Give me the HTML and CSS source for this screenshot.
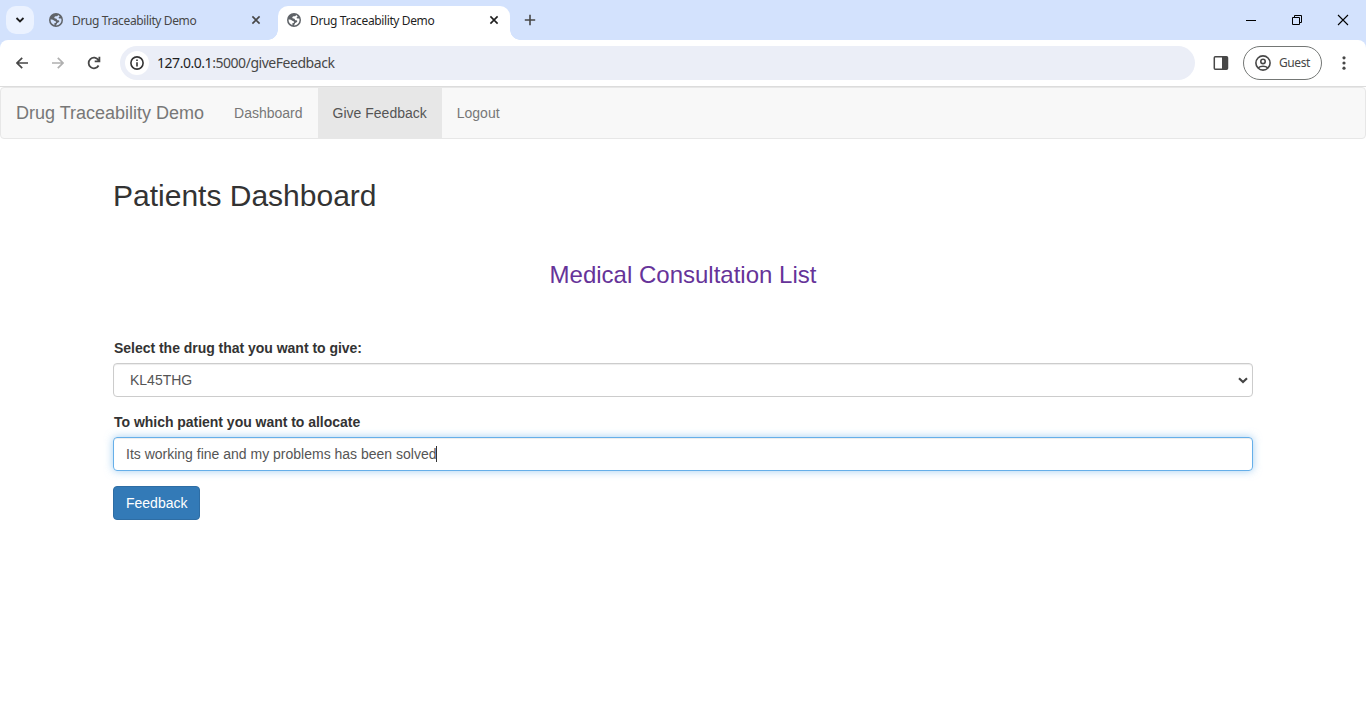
FILE: index.html
```html
<!DOCTYPE html>
<html lang="en">
<head>
<meta charset="utf-8">
<title>Drug Traceability Demo</title>
<link rel="stylesheet" href="styles.css">
</head>
<body>
<svg class="defs" width="0" height="0">
  <symbol id="globe" viewBox="0 0 14 14">
    <circle cx="7" cy="7" r="7" fill="#5f6368"/>
    <path fill="currentColor" d="M9.2 1.9C8.6 3.2 7.6 3.2 6.5 3.3C5.2 3.7 4.8 5.1 6 5.6C7.3 5.6 7.9 6 8 7.1C8.8 7.6 9.9 7.2 10.3 8.1C10.3 9.2 9.2 9.9 8.1 10.1C7.9 11.2 7.2 11.8 7 12.5C10.2 12.4 12.5 10 12.5 7C12.5 6.4 12.4 5.9 12.2 5.4C11.4 5.8 10.6 5.6 9.8 5.3C9.2 4.8 9.9 4.3 10.7 3.6C10.5 2.9 9.9 2.3 9.2 1.9ZM1.5 6.6C1.4 9.4 3.3 11.6 5.5 12.2L5.2 10.5C5.7 9.9 6.9 10.1 7.1 9.2C7.1 8.3 5.9 8.3 5.3 7.8C4.6 7 3.3 6.6 1.5 6.6Z"/>
  </symbol>
  <symbol id="close" viewBox="0 0 10 10"><path d="M1.4 1.4 8.6 8.6M8.6 1.4 1.4 8.6" fill="none" stroke="currentColor" stroke-width="1.6"/></symbol>
</svg>

<header class="browser">
  <div class="tabstrip">
    <div class="tab-search"><svg width="10" height="6" viewBox="0 0 10 6"><path d="M1.5 1 5 4.5 8.5 1" fill="none" stroke="#1f1f1f" stroke-width="1.8"/></svg></div>
    <div class="tab">
      <svg class="favicon"><use href="#globe"/></svg><span class="tab-title">Drug Traceability Demo</span><svg class="tab-close"><use href="#close"/></svg>
    </div>
    <div class="tab active">
      <svg class="favicon"><use href="#globe"/></svg><span class="tab-title">Drug Traceability Demo</span><svg class="tab-close"><use href="#close"/></svg>
    </div>
    <svg class="new-tab" width="12" height="12" viewBox="0 0 12 12"><path d="M6 .8V11.2M.8 6H11.2" stroke="#474747" stroke-width="1.6"/></svg>
    <div class="window-buttons">
      <svg width="12" height="12" viewBox="0 0 12 12"><path d="M1 6.5H11" stroke="#000"/></svg>
      <svg width="12" height="12" viewBox="0 0 12 12"><path d="M1.5 3.5H8.5V10.5H1.5ZM3.5 3.5V1.5H10.5V8.5H8.5" fill="none" stroke="#000"/></svg>
      <svg width="12" height="12" viewBox="0 0 12 12"><path d="M1 1 11 11M11 1 1 11" stroke="#000" stroke-width="1.1"/></svg>
    </div>
  </div>
  <div class="toolbar">
    <div class="nav-buttons">
      <svg width="12" height="12" viewBox="0 0 12 12"><path d="M12 6H1.3M6.2 .8 1 6l5.2 5.2" fill="none" stroke="#474747" stroke-width="1.7"/></svg>
      <svg width="12" height="12" viewBox="0 0 12 12"><path d="M0 6H10.7M5.8 .8 11 6l-5.2 5.2" fill="none" stroke="#b0b0b0" stroke-width="1.7"/></svg>
      <svg width="14" height="14" viewBox="0 0 14 14"><path d="M11.6 9.5A5.3 5.3 0 1 1 11.4 4.1L12.3 5.2M12.4 .8V5.4H7.7" fill="none" stroke="#474747" stroke-width="1.8"/></svg>
    </div>
    <div class="omnibox">
      <span class="site-info"><svg width="14" height="14" viewBox="0 0 14 14"><circle cx="7" cy="7" r="6.1" fill="none" stroke="#333" stroke-width="1.6"/><path d="M7 6.2V10.4M7 3.5V5" stroke="#333" stroke-width="1.6"/></svg></span>
      <span class="url"><span class="host">127.0.0.1</span>:5000/giveFeedback</span>
    </div>
    <svg class="side-panel" width="16" height="14" viewBox="0 0 16 14"><rect x="1.3" y=".8" width="13.2" height="12.4" rx="1" fill="none" stroke="#474747" stroke-width="1.5"/><path d="M9 1H14.5V13H9Z" fill="#474747"/></svg>
    <div class="profile">
      <svg width="16" height="16" viewBox="0 0 16 16" fill="none" stroke="#474747" stroke-width="1.6"><circle cx="8" cy="8" r="7.1"/><circle cx="8" cy="6.4" r="2.2"/><path d="M3.2 12.9C5.6 10.7 10.4 10.7 12.8 12.9"/></svg>
      <span>Guest</span>
    </div>
    <svg class="menu" width="4" height="14" viewBox="0 0 4 14" fill="#474747"><circle cx="2" cy="1.8" r="1.6"/><circle cx="2" cy="7" r="1.6"/><circle cx="2" cy="12.2" r="1.6"/></svg>
  </div>
</header>

<nav class="navbar">
  <a class="brand">Drug Traceability Demo</a>
  <a class="nav-link">Dashboard</a>
  <a class="nav-link current">Give Feedback</a>
  <a class="nav-link">Logout</a>
</nav>

<main class="container">
  <h2 class="page-title">Patients Dashboard</h2>
  <h3 class="list-title">Medical Consultation List</h3>
  <form>
    <div class="form-group">
      <label class="label">Select the drug that you want to give:</label>
      <div class="control select"><span>KL45THG</span><svg width="10" height="7" viewBox="0 0 10 7"><path d="M1 1.2 5 5.1 9 1.2" fill="none" stroke="#444" stroke-width="2.1"/></svg></div>
    </div>
    <div class="form-group">
      <label class="label">To which patient you want to allocate</label>
      <div class="control focused"><span>Its working fine and my problems has been solved</span><i class="caret"></i></div>
    </div>
    <button class="submit" type="button">Feedback</button>
  </form>
</main>
</body>
</html>
```
FILE: styles.css
```css
* { box-sizing: border-box; }
body {
  margin: 0;
  height: 728px;
  overflow: hidden;
  background: #fff;
  color: #333;
  font: 14px/20px "Liberation Sans", Arial, sans-serif;
}
svg { display: block; flex: none; }
.defs { position: absolute; }

.browser { font-family: "Noto Sans", "Open Sans", sans-serif; background: #d3e2fd; }
.tabstrip { display: flex; align-items: center; height: 40px; padding-left: 6px; }
.tab-search {
  display: flex; align-items: center; justify-content: center;
  width: 28px; height: 28px; border-radius: 10px; background: #ebf2ff;
}
.tab {
  display: flex; align-items: center;
  width: 232px; height: 34px; margin: 6px 0 0 6px; padding: 0 11px 6px 9px;
  font-size: 12px; line-height: 16px; color: #474747;
}
.tab-title { flex: 1; margin-left: 9px; padding-top: 2px; white-space: nowrap; letter-spacing: -0.38px; }
.favicon { width: 14px; height: 14px; color: #d3e2fd; }
.active .favicon { color: #fff; }
.tab-close { width: 10px; height: 10px; }
.tab.active { position: relative; background: #fff; border-radius: 10px 10px 0 0; color: #1f1f1f; }
.tab.active::before, .tab.active::after {
  content: ""; position: absolute; bottom: 0; width: 10px; height: 10px;
}
.tab.active::before { left: -10px; background: radial-gradient(circle at 0 0, transparent 9.5px, #fff 10px); }
.tab.active::after { right: -10px; background: radial-gradient(circle at 100% 0, transparent 9.5px, #fff 10px); }
.new-tab { margin-left: 14px; }
.window-buttons { display: flex; gap: 34px; margin: 0 17px 0 auto; }

.toolbar {
  display: flex; align-items: center; height: 47px;
  border-bottom: 1px solid #dcdcdc; border-radius: 8px 8px 0 0; background: #fff;
  padding: 0 20px 0 16px;
}
.nav-buttons { display: flex; align-items: center; gap: 24px; width: 104px; }
.nav-buttons svg:last-child { margin-left: -1px; }
.omnibox {
  display: flex; align-items: center; width: 1075px; height: 34px;
  padding-left: 5px; border-radius: 17px; background: #ebeef7;
}
.site-info {
  display: flex; align-items: center; justify-content: center;
  width: 24px; height: 24px; border-radius: 50%; background: #fff;
}
.url { margin-left: 8px; font-size: 14px; color: #474747; letter-spacing: -0.46px; white-space: nowrap; }
.host { color: #1f1f1f; }
.side-panel { margin-left: 18px; }
.profile {
  display: flex; align-items: center; gap: 8px;
  width: 79px; height: 34px; margin-left: 14px; padding-left: 11px;
  border: 1px solid #747775; border-radius: 17px; font-size: 12px; letter-spacing: -0.4px; color: #474747;
}
.menu { margin-left: 20px; }

.navbar {
  display: flex; height: 52px;
  border: 1px solid #e7e7e7; border-radius: 4px; background: #f8f8f8;
}
.brand { padding: 15px; font-size: 18px; color: #777; }
.nav-link { padding: 15px; color: #777; }
.nav-link.current { background: #e7e7e7; color: #555; }

.container { width: 1140px; margin: 0 auto; padding-top: 40px; }
.page-title { margin: 0; font-size: 30px; line-height: 33px; font-weight: 500; }
.list-title { margin: 50px 0 50px; font-size: 24px; line-height: 26px; font-weight: 500; text-align: center; color: #663399; }
.form-group { margin-bottom: 15px; }
.label { display: block; margin-bottom: 5px; padding-left: 1px; font-weight: 700; letter-spacing: -0.025px; }
.control {
  display: flex; align-items: center; height: 34px; padding: 6px 12px;
  border: 1px solid #ccc; border-radius: 4px; color: #555;
  box-shadow: inset 0 1px 1px rgba(0, 0, 0, .075);
}
.select { justify-content: space-between; padding: 6px 4px 6px 16px; }
.focused { border-color: #66afe9; box-shadow: inset 0 1px 1px rgba(0, 0, 0, .075), 0 0 8px rgba(102, 175, 233, .6); }
.caret { width: 1px; height: 16px; margin-left: -1px; background: #333; }
.submit {
  display: block; height: 34px; padding: 6px 12px;
  border: 1px solid #2e6da4; border-radius: 4px; background: #337ab7;
  font: inherit; color: #fff;
}
```
